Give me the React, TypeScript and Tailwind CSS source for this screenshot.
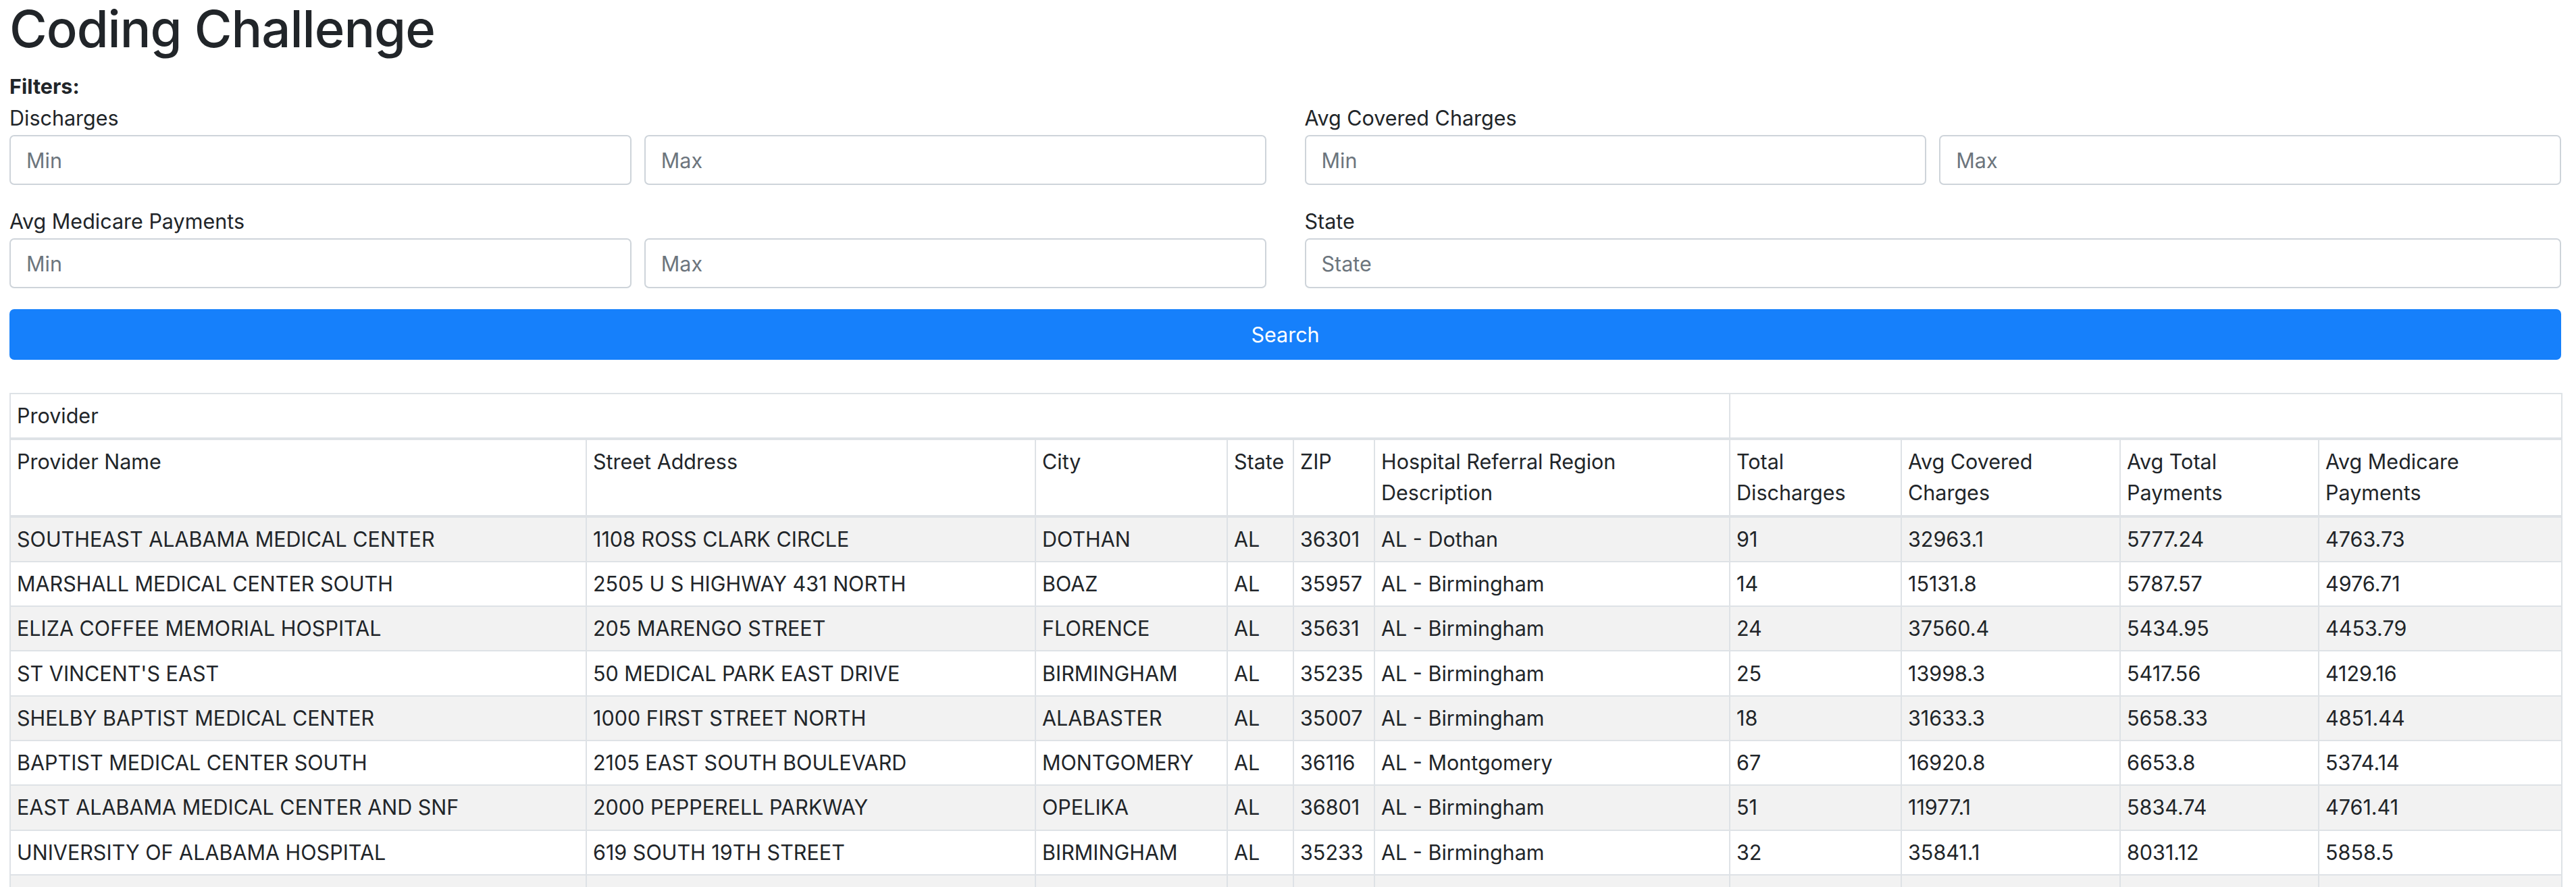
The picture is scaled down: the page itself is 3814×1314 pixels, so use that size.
import React from 'react';

interface ProviderRow {
  name: string;
  street: string;
  city: string;
  state: string;
  zip: string;
  region: string;
  discharges: number;
  covered: string;
  total: string;
  medicare: string;
}

const rows: ProviderRow[] = [
  { name: 'SOUTHEAST ALABAMA MEDICAL CENTER', street: '1108 ROSS CLARK CIRCLE', city: 'DOTHAN', state: 'AL', zip: '36301', region: 'AL - Dothan', discharges: 91, covered: '32963.1', total: '5777.24', medicare: '4763.73' },
  { name: 'MARSHALL MEDICAL CENTER SOUTH', street: '2505 U S HIGHWAY 431 NORTH', city: 'BOAZ', state: 'AL', zip: '35957', region: 'AL - Birmingham', discharges: 14, covered: '15131.8', total: '5787.57', medicare: '4976.71' },
  { name: 'ELIZA COFFEE MEMORIAL HOSPITAL', street: '205 MARENGO STREET', city: 'FLORENCE', state: 'AL', zip: '35631', region: 'AL - Birmingham', discharges: 24, covered: '37560.4', total: '5434.95', medicare: '4453.79' },
  { name: "ST VINCENT'S EAST", street: '50 MEDICAL PARK EAST DRIVE', city: 'BIRMINGHAM', state: 'AL', zip: '35235', region: 'AL - Birmingham', discharges: 25, covered: '13998.3', total: '5417.56', medicare: '4129.16' },
  { name: 'SHELBY BAPTIST MEDICAL CENTER', street: '1000 FIRST STREET NORTH', city: 'ALABASTER', state: 'AL', zip: '35007', region: 'AL - Birmingham', discharges: 18, covered: '31633.3', total: '5658.33', medicare: '4851.44' },
  { name: 'BAPTIST MEDICAL CENTER SOUTH', street: '2105 EAST SOUTH BOULEVARD', city: 'MONTGOMERY', state: 'AL', zip: '36116', region: 'AL - Montgomery', discharges: 67, covered: '16920.8', total: '6653.8', medicare: '5374.14' },
  { name: 'EAST ALABAMA MEDICAL CENTER AND SNF', street: '2000 PEPPERELL PARKWAY', city: 'OPELIKA', state: 'AL', zip: '36801', region: 'AL - Birmingham', discharges: 51, covered: '11977.1', total: '5834.74', medicare: '4761.41' },
  { name: 'UNIVERSITY OF ALABAMA HOSPITAL', street: '619 SOUTH 19TH STREET', city: 'BIRMINGHAM', state: 'AL', zip: '35233', region: 'AL - Birmingham', discharges: 32, covered: '35841.1', total: '8031.12', medicare: '5858.5' },
  { name: 'HUNTSVILLE HOSPITAL', street: '101 SIVLEY RD', city: 'HUNTSVILLE', state: 'AL', zip: '35801', region: 'AL - Huntsville', discharges: 35, covered: '23498.4', total: '5612.1', medicare: '4588.7' },
];

const FilterInput = ({ placeholder }: { placeholder: string }) => (
  <input
    type="text"
    placeholder={placeholder}
    className="h-[74px] w-full min-w-0 rounded-[7px] border-2 border-[#ced4da] bg-white px-[23px] text-[30.5px] leading-[46px] text-[#495057] outline-none placeholder:text-[#6c757d]"
  />
);

const FilterGroup = ({ label, children }: { label: string; children: React.ReactNode }) => (
  <div className="mb-[31px]">
    <label className="mb-[2px] block">{label}</label>
    <div className="flex gap-[19px]">{children}</div>
  </div>
);

const th = 'border-2 border-b-4 border-[#dee2e6] px-[9px] py-[9.15px] text-left align-top font-normal';
const td = 'border-2 border-[#dee2e6] px-[9px] py-[9.15px] align-top';

export default function App() {
  return (
    <div className="min-h-screen bg-white pl-[14px] pr-[22px] font-['Inter',sans-serif] text-[30.5px] leading-[46px] text-[#212529]">
      <h1 className="text-[76px] font-medium leading-[84px] tracking-[-1px]">Coding Challenge</h1>
      <div className="mt-[21px] font-bold">Filters:</div>

      <div className="mt-[1px] grid grid-cols-2 gap-x-[57px]">
        <FilterGroup label="Discharges">
          <FilterInput placeholder="Min" />
          <FilterInput placeholder="Max" />
        </FilterGroup>
        <FilterGroup label="Avg Covered Charges">
          <FilterInput placeholder="Min" />
          <FilterInput placeholder="Max" />
        </FilterGroup>
        <FilterGroup label="Avg Medicare Payments">
          <FilterInput placeholder="Min" />
          <FilterInput placeholder="Max" />
        </FilterGroup>
        <FilterGroup label="State">
          <FilterInput placeholder="State" />
        </FilterGroup>
      </div>

      <button className="h-[75px] w-full rounded-[7px] bg-[#1680fb] text-center text-white">Search</button>

      <table className="mt-[49px] w-full table-fixed border-collapse">
        <colgroup>
          <col className="w-[853px]" />
          <col className="w-[665px]" />
          <col className="w-[284px]" />
          <col className="w-[98px]" />
          <col className="w-[120px]" />
          <col className="w-[526px]" />
          <col className="w-[254px]" />
          <col className="w-[324px]" />
          <col className="w-[294px]" />
          <col className="w-[360px]" />
        </colgroup>
        <thead>
          <tr>
            <th colSpan={6} className={th}>Provider</th>
            <th colSpan={4} className={th}></th>
          </tr>
          <tr>
            <th className={th}>Provider Name</th>
            <th className={th}>Street Address</th>
            <th className={th}>City</th>
            <th className={th}>State</th>
            <th className={th}>ZIP</th>
            <th className={th}>Hospital Referral Region<br />Description</th>
            <th className={th}>Total<br />Discharges</th>
            <th className={th}>Avg Covered<br />Charges</th>
            <th className={th}>Avg Total<br />Payments</th>
            <th className={th}>Avg Medicare<br />Payments</th>
          </tr>
        </thead>
        <tbody>
          {rows.map((r, i) => (
            <tr key={r.name} className={i % 2 === 0 ? 'bg-[#f2f2f2]' : 'bg-white'}>
              <td className={td}>{r.name}</td>
              <td className={td}>{r.street}</td>
              <td className={td}>{r.city}</td>
              <td className={td}>{r.state}</td>
              <td className={td}>{r.zip}</td>
              <td className={td}>{r.region}</td>
              <td className={td}>{r.discharges}</td>
              <td className={td}>{r.covered}</td>
              <td className={td}>{r.total}</td>
              <td className={td}>{r.medicare}</td>
            </tr>
          ))}
        </tbody>
      </table>
    </div>
  );
}
